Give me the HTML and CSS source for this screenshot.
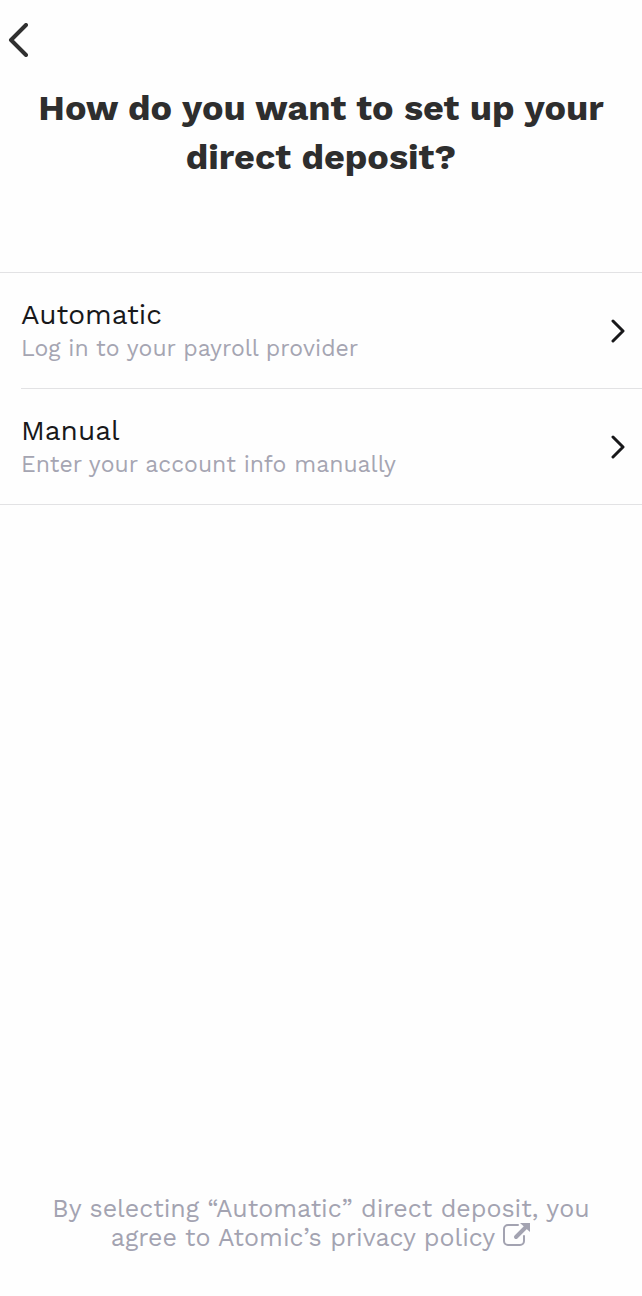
FILE: index.html
```html
<!DOCTYPE html>
<html lang="en">

<head>
    <meta charset="UTF-8">
    <meta name="viewport" content="width=device-width, initial-scale=1.0">
    <title>Direct Deposit</title>
    <link rel="stylesheet" href="styles.css">
</head>

<body>

    <header class="top-bar">
        <button class="back-button" type="button" aria-label="Back">
            <svg width="20" height="34" viewBox="0 0 20 34" aria-hidden="true">
                <path d="M18 2 3 17l15 15" />
            </svg>
        </button>
    </header>

    <main class="content">
        <h1 class="title">How do you want to set up your direct deposit?</h1>

        <ul class="options">
            <li class="option">
                <button class="option-button" type="button">
                    <span class="option-text">
                        <span class="option-name">Automatic</span>
                        <span class="option-info">Log in to your payroll provider</span>
                    </span>
                    <svg class="chevron" width="14" height="24" viewBox="0 0 14 24" aria-hidden="true">
                        <path d="M2 2l10 10L2 22" />
                    </svg>
                </button>
            </li>
            <li class="option">
                <button class="option-button" type="button">
                    <span class="option-text">
                        <span class="option-name">Manual</span>
                        <span class="option-info">Enter your account info manually</span>
                    </span>
                    <svg class="chevron" width="14" height="24" viewBox="0 0 14 24" aria-hidden="true">
                        <path d="M2 2l10 10L2 22" />
                    </svg>
                </button>
            </li>
        </ul>
    </main>

    <footer class="footer">
        <a class="policy-link" href="#">By selecting “Automatic” direct deposit, you agree to Atomic’s privacy policy
            <svg class="external" width="28" height="24" viewBox="0 0 28 24" aria-hidden="true">
                <path class="box" d="M15 2H5a4 4 0 0 0-4 4v12a4 4 0 0 0 4 4h12a4 4 0 0 0 4-4v-5" />
                <path class="arrow" d="M13 14 23 4" />
                <path class="head" d="M17 0h10v9z" />
            </svg></a>
    </footer>

</body>

</html>
```
FILE: styles.css
```css
* {
    box-sizing: border-box;
}

body {
    margin: 0;
    min-height: 100vh;
    display: flex;
    flex-direction: column;
    font-family: "Work Sans", Inter, sans-serif;
    color: #18181a;
    background: #fefefe;
}

button {
    border: none;
    background: none;
    color: inherit;
    font: inherit;
    cursor: pointer;
}

svg path {
    fill: none;
    stroke: currentColor;
    stroke-linecap: round;
    stroke-linejoin: round;
}

/* Header */
.top-bar {
    padding: 23px 8px 0;
}

.back-button {
    display: block;
    padding: 0;
    color: #303030;
}

.back-button path {
    stroke-width: 4;
}

.content {
    flex: 1;
}

.title {
    margin: 0;
    padding: 23px 32px 90px;
    font-size: 36px;
    line-height: 49px;
    font-weight: 700;
    text-align: center;
    color: #2e2e2e;
}

/* Options */
.options {
    margin: 0;
    padding: 0;
    list-style: none;
    border-top: 1px solid #e2e2e4;
    border-bottom: 1px solid #e2e2e4;
}

.option + .option {
    margin-left: 21px;
    border-top: 1px solid #e2e2e4;
}

.option-button {
    width: 100%;
    display: flex;
    align-items: center;
    justify-content: space-between;
    padding: 24px 17px 24px 21px;
    text-align: left;
}

.option + .option .option-button {
    padding-left: 0;
}

.option-name,
.option-info {
    display: block;
}

.option-name {
    font-size: 28px;
    line-height: 36px;
}

.option-info {
    font-size: 23px;
    line-height: 31px;
    color: #a5a5b2;
}

.chevron path {
    stroke-width: 3;
}

/* Footer */
.footer {
    padding: 0 48px 44px;
    font-size: 25px;
    line-height: 29px;
    text-align: center;
    color: #a3a3b1;
}

.policy-link {
    color: inherit;
    text-decoration: none;
}

.external {
    vertical-align: top;
}

.external .box {
    stroke-width: 2;
}

.external .arrow {
    stroke-width: 4;
}

.external .head {
    fill: currentColor;
    stroke: none;
}
```
